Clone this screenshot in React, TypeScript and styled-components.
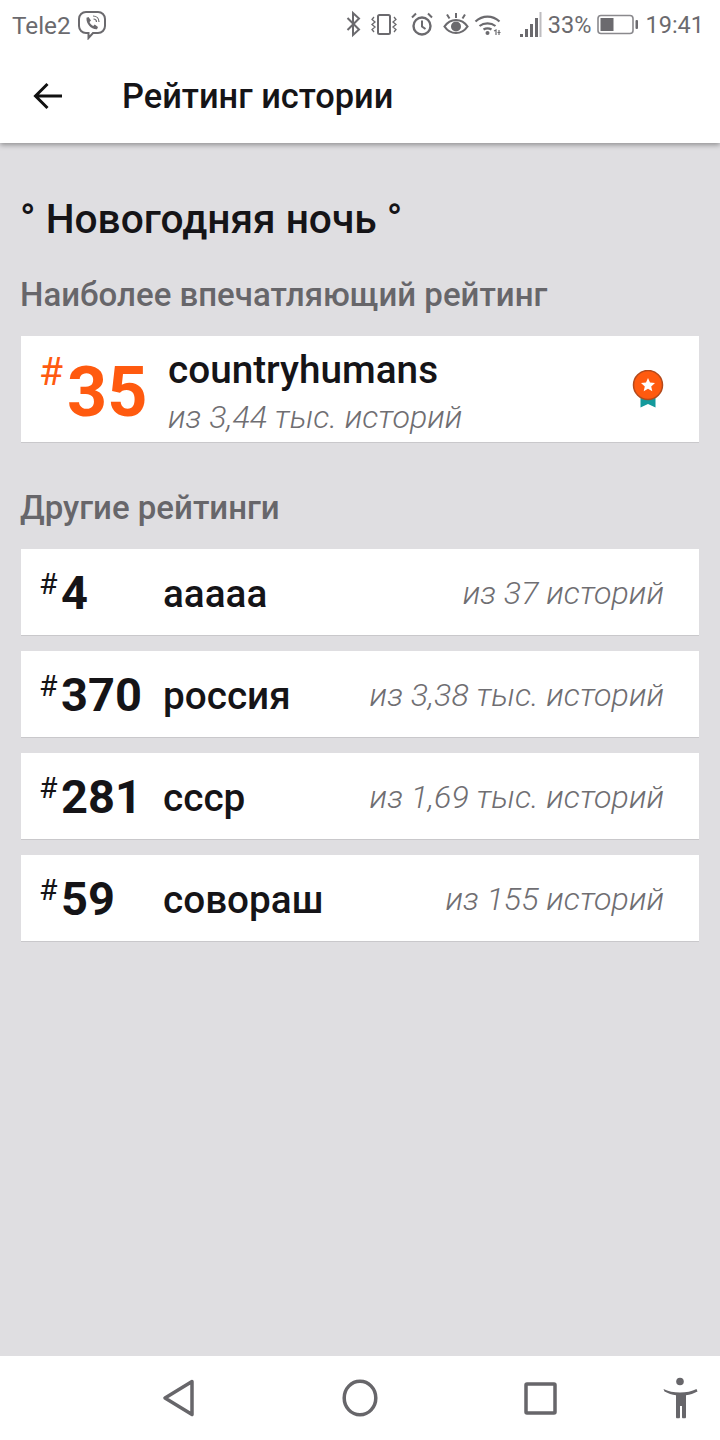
import React from 'react'
import styled, { createGlobalStyle } from 'styled-components'

const GlobalStyle = createGlobalStyle`
  html, body {
    margin: 0;
    padding: 0;
    background: #dfdee1;
    font-family: Roboto, "Noto Sans", sans-serif;
  }
`

const Screen = styled.div`
  width: 720px;
  height: 1440px;
  display: flex;
  flex-direction: column;
  background: #dfdee1;
  overflow: hidden;
`

const Top = styled.header`
  height: 143px;
  flex-shrink: 0;
  background: #fff;
  box-shadow: 0 2px 5px rgba(0, 0, 0, 0.35);
  position: relative;
  z-index: 1;
`

const StatusBar = styled.div`
  height: 50px;
  padding: 0 16px 0 12px;
  display: flex;
  align-items: center;
  justify-content: space-between;
  color: #6b6a6e;
  font-size: 23.5px;
`

const StatusGroup = styled.div<{ $gap: number }>`
  display: flex;
  align-items: center;
  gap: ${({ $gap }) => $gap}px;
`

const Carrier = styled.span`
  font-size: 24.3px;
`

const TitleBar = styled.div`
  height: 93px;
  display: flex;
  align-items: center;
  padding-bottom: 2px;
  box-sizing: border-box;
`

const BackButton = styled.div`
  width: 122px;
  padding-left: 33px;
  box-sizing: border-box;
  display: flex;
  align-items: center;
`

const PageTitle = styled.div`
  font-size: 34.4px;
  font-weight: 500;
  color: #151417;
`

const Content = styled.main`
  flex: 1;
  padding: 51px 21px 0;
  display: flex;
  flex-direction: column;
`

const StoryTitle = styled.h1`
  margin: 0 0 0 -1px;
  font-size: 40.7px;
  line-height: 50px;
  font-weight: 500;
  color: #151417;
`

const SectionTitle = styled.h2<{ $top: number }>`
  margin: ${({ $top }) => $top}px 0 0 -1px;
  font-size: 33px;
  line-height: 40px;
  font-weight: 500;
  color: #67666a;
`

const FeaturedCard = styled.div`
  margin-top: 21px;
  height: 107px;
  box-sizing: border-box;
  background: #fff;
  border-bottom: 1px solid #c9c8cb;
  display: flex;
  align-items: center;
  padding: 0 35px 0 18px;
`

const FeaturedRank = styled.div`
  width: 129px;
  flex-shrink: 0;
  display: flex;
  align-items: flex-start;
  color: #ff5a0f;
  font-weight: 700;
`

const FeaturedHash = styled.span`
  font-size: 39px;
  line-height: 42px;
  font-weight: 400;
  margin-top: 6px;
  width: 28px;
`

const FeaturedNumber = styled.span`
  font-size: 70px;
  line-height: 82px;
  margin-top: 6px;
`

const FeaturedText = styled.div`
  flex: 1;
  display: flex;
  flex-direction: column;
  gap: 5px;
  padding-top: 5px;
`

const FeaturedName = styled.div`
  font-size: 38.7px;
  line-height: 46px;
  font-weight: 500;
  color: #151417;
`

const OutOf = styled.div`
  font-size: 32.2px;
  line-height: 38px;
  font-weight: 300;
  font-style: italic;
  color: #6f6e72;
`

const RowTotal = styled(OutOf)`
  margin-top: 2px;
`

const RowList = styled.div`
  margin-top: 21px;
  display: flex;
  flex-direction: column;
  gap: 15px;
`

const Row = styled.div`
  height: 87px;
  box-sizing: border-box;
  background: #fff;
  border-bottom: 1px solid #c9c8cb;
  display: flex;
  align-items: center;
  padding: 0 35px 0 20px;
`

const RowRank = styled.div`
  width: 122px;
  flex-shrink: 0;
  display: flex;
  align-items: flex-start;
  color: #151417;
`

const RowHash = styled.span`
  font-size: 30px;
  line-height: 30px;
  width: 22px;
  margin: 5px 0 0 -2px;
`

const RowNumber = styled.span`
  font-size: 47px;
  line-height: 56px;
  font-weight: 700;
  margin-top: 1px;
`

const RowName = styled.div`
  flex: 1;
  font-size: 38.7px;
  font-weight: 500;
  color: #151417;
  margin-top: 2px;
`

const NavBar = styled.nav`
  height: 84px;
  flex-shrink: 0;
  background: #fff;
  padding-left: 90px;
  display: grid;
  grid-template-columns: 180px 180px 180px 1fr;
  align-items: center;
`

const NavButton = styled.div`
  display: flex;
  justify-content: center;
`

const AccessButton = styled(NavButton)`
  justify-content: flex-end;
  padding-right: 22px;
`

const ViberIcon = () => (
  <svg width="30" height="30" viewBox="0 0 30 30" fill="none" stroke="#6b6a6e" strokeWidth="2">
    <path d="M9 2h12a7 7 0 0 1 7 7v7a7 7 0 0 1-7 7h-5l-4.500 5v-5H9a7 7 0 0 1-7-7V9a7 7 0 0 1 7-7Z" />
    <path d="M9 8l2.500-1 2.500 3.500-1.500 1.500c.6 1.800 2 3.200 3.800 3.900l1.400-1.500 3.300 2.500-1 2.400c-5.500.5-11-5.300-10.500-11.300Z" fill="#6b6a6e" stroke="none" />
    <path d="M16 6c3.500 0 6 2.500 6 6M16.500 9c1.800 0 3 1.200 3 3" strokeWidth="1.200" />
  </svg>
)

// one strip of status glyphs, x = screen x - 340
const StatusIcons = () => (
  <svg width="172" height="32" viewBox="0 0 172 32" fill="none" stroke="#6b6a6e" strokeWidth="2">
    {/* bluetooth */}
    <path d="M6.500 9L18 20.500 12 26V4l6 5.500L6.500 21" />
    {/* vibrate */}
    <rect x="37" y="6" width="12" height="19" rx="1.500" />
    <path d="M33 8l-2 2.500 3 2.500-3 2.500 3 2.500-3 2.500 2 2.500M53 8l2 2.500-3 2.500 3 2.500-3 2.500 3 2.500-2 2.500" strokeWidth="1.300" />
    {/* alarm */}
    <circle cx="81" cy="17" r="8.500" strokeWidth="2.400" />
    <path d="M81 11.500v6l3.500 2.500M71 8.500l4-4M91 8.500l-4-4" />
    {/* eye */}
    <path d="M103.500 17.500c3-4.500 7-6.500 11.500-6.500s8.500 2 11.500 6.500c-3 4.500-7 6.500-11.500 6.500s-8.500-2-11.500-6.500Z" strokeWidth="2.200" />
    <circle cx="115" cy="17.500" r="5" fill="#6b6a6e" stroke="none" />
    <path d="M106 5.500l2.500 4M115 4v5M124 5.500l-2.500 4" />
    {/* wifi */}
    <path d="M134.500 12.500c7-6.500 17-6.500 24 0M138.500 17c4.500-3.500 11.500-3.500 16 0M142.500 20.500c2.500-1.500 5.500-1.500 8 0" strokeWidth="2.200" />
    <circle cx="146.500" cy="24" r="2" fill="#6b6a6e" stroke="none" />
    <path d="M153 22l2-1v5M158 21v5M156.500 23.500h3" strokeWidth="1.200" />
  </svg>
)

const SignalIcon = () => (
  <svg width="23" height="28" viewBox="0 0 23 28" fill="#6b6a6e">
    <rect x="1" y="23" width="3" height="3" />
    <rect x="6" y="18" width="3" height="8" />
    <rect x="11" y="13" width="3" height="13" />
    <rect x="16" y="7" width="3" height="19" />
    <rect x="20.500" y="1" width="2" height="25" fill="#bdbcbf" />
  </svg>
)

const BatteryIcon = () => (
  <svg width="42" height="22" viewBox="0 0 42 22" fill="none">
    <rect x="1" y="1.500" width="35" height="18" rx="3" stroke="#8a898d" strokeWidth="1.600" />
    <rect x="3.500" y="4" width="13" height="13" fill="#6b6a6e" />
    <rect x="38.500" y="6" width="2.500" height="9" rx="1" fill="#6b6a6e" />
  </svg>
)

const BackArrow = () => (
  <svg width="30" height="28" viewBox="0 0 30 28" fill="none" stroke="#111" strokeWidth="3">
    <path d="M29 14H3M14.500 2L2.500 14l12 12" />
  </svg>
)

const Medal = () => (
  <svg width="32" height="38" viewBox="0 0 32 38">
    <path d="M8.500 25h15v12.500l-7.500-3.500-7.500 3.500Z" fill="#149a9c" />
    <circle cx="16" cy="15" r="14.500" fill="#ff5a0f" stroke="#b34a1c" strokeWidth="1.500" />
    <path d="M16 8l2 4.600 5 .5-3.800 3.300 1.100 4.900-4.300-2.600-4.300 2.600 1.100-4.900L9 13.100l5-.5Z" fill="#fff" />
  </svg>
)

const BackNav = () => (
  <svg width="36" height="40" viewBox="0 0 36 40" fill="none" stroke="#67666a" strokeWidth="3.500" strokeLinejoin="round">
    <path d="M30 3.500 L3 20 L30 36.500Z" />
  </svg>
)

const HomeNav = () => (
  <svg width="36" height="38" viewBox="0 0 36 38" fill="none" stroke="#67666a" strokeWidth="3.500">
    <ellipse cx="18" cy="19" rx="15.800" ry="16.800" />
  </svg>
)

const SquareNav = () => (
  <svg width="33" height="33" viewBox="0 0 33 33" fill="none" stroke="#67666a" strokeWidth="3.500" strokeLinejoin="round">
    <rect x="2" y="2" width="29" height="29" rx="1" />
  </svg>
)

const AccessNav = () => (
  <svg width="36" height="42" viewBox="0 0 36 42" fill="#67666a">
    <circle cx="18" cy="4.500" r="3.800" />
    <path d="M1.500 12c4.500 2.500 10.500 3.500 16.500 3.500S30 14.500 34.500 12l1 2.500c-3.600 2-7.500 3.200-11.500 3.700V40c0 .8-.4 1.300-1.200 1.300h-1.600c-.8 0-1.200-.5-1.200-1.300V29h-2v11c0 .8-.4 1.300-1.200 1.300h-1.600c-.8 0-1.200-.5-1.200-1.300V18.200c-4-.5-7.900-1.700-11.500-3.700Z" />
  </svg>
)

const others = [
  { rank: '4', name: 'ааааа', total: 'из 37 историй' },
  { rank: '370', name: 'россия', total: 'из 3,38 тыс. историй' },
  { rank: '281', name: 'ссср', total: 'из 1,69 тыс. историй' },
  { rank: '59', name: 'совораш', total: 'из 155 историй' },
]

export default function App() {
  return (
    <Screen>
      <GlobalStyle />
      <Top>
        <StatusBar>
          <StatusGroup $gap={6}>
            <Carrier>Tele2</Carrier>
            <ViberIcon />
          </StatusGroup>
          <StatusGroup $gap={6}>
            <StatusIcons />
            <SignalIcon />
            <span>33%</span>
            <BatteryIcon />
            <span>19:41</span>
          </StatusGroup>
        </StatusBar>
        <TitleBar>
          <BackButton>
            <BackArrow />
          </BackButton>
          <PageTitle>Рейтинг истории</PageTitle>
        </TitleBar>
      </Top>
      <Content>
        <StoryTitle>° Новогодняя ночь °</StoryTitle>
        <SectionTitle $top={31}>Наиболее впечатляющий рейтинг</SectionTitle>
        <FeaturedCard>
          <FeaturedRank>
            <FeaturedHash>#</FeaturedHash>
            <FeaturedNumber>35</FeaturedNumber>
          </FeaturedRank>
          <FeaturedText>
            <FeaturedName>countryhumans</FeaturedName>
            <OutOf>из 3,44 тыс. историй</OutOf>
          </FeaturedText>
          <Medal />
        </FeaturedCard>
        <SectionTitle $top={45}>Другие рейтинги</SectionTitle>
        <RowList>
          {others.map(({ rank, name, total }) => (
            <Row key={rank}>
              <RowRank>
                <RowHash>#</RowHash>
                <RowNumber>{rank}</RowNumber>
              </RowRank>
              <RowName>{name}</RowName>
              <RowTotal>{total}</RowTotal>
            </Row>
          ))}
        </RowList>
      </Content>
      <NavBar>
        <NavButton><BackNav /></NavButton>
        <NavButton><HomeNav /></NavButton>
        <NavButton><SquareNav /></NavButton>
        <AccessButton><AccessNav /></AccessButton>
      </NavBar>
    </Screen>
  )
}
